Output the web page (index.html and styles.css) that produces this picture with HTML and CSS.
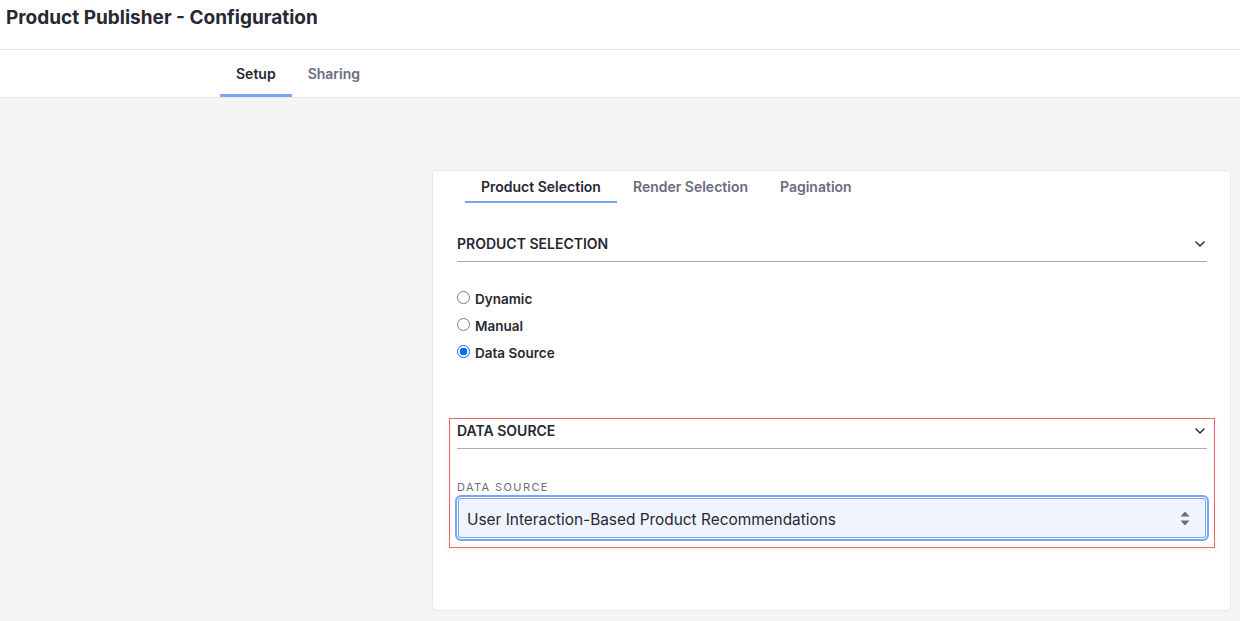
FILE: index.html
```html
<!DOCTYPE html>
<html lang="en">
<head>
<meta charset="utf-8">
<title>Product Publisher - Configuration</title>
<link rel="stylesheet" href="styles.css">
</head>
<body>
<header class="page-header">
  <h1 class="page-title">Product Publisher - Configuration</h1>
</header>
<nav class="top-tabs">
  <a class="top-tab active">Setup</a>
  <a class="top-tab">Sharing</a>
</nav>
<main class="main">
  <section class="card">
    <nav class="card-tabs">
      <a class="card-tab active">Product Selection</a>
      <a class="card-tab">Render Selection</a>
      <a class="card-tab">Pagination</a>
    </nav>
    <div class="card-body">
      <div class="panel-head">
        <span>PRODUCT SELECTION</span>
        <svg class="chevron" width="10" height="6" viewBox="0 0 10 6"><path d="M1 1l4 4 4-4" fill="none" stroke="#272833" stroke-width="1.5" stroke-linecap="round" stroke-linejoin="round"/></svg>
      </div>
      <div class="radios">
        <label class="radio"><span class="radio-dot"></span>Dynamic</label>
        <label class="radio"><span class="radio-dot"></span>Manual</label>
        <label class="radio"><span class="radio-dot checked"></span>Data Source</label>
      </div>
      <div class="highlight">
        <div class="panel-head">
          <span>DATA SOURCE</span>
          <svg class="chevron" width="10" height="6" viewBox="0 0 10 6"><path d="M1 1l4 4 4-4" fill="none" stroke="#272833" stroke-width="1.5" stroke-linecap="round" stroke-linejoin="round"/></svg>
        </div>
        <div class="field-label">DATA SOURCE</div>
        <div class="select">
          <span>User Interaction-Based Product Recommendations</span>
          <svg class="select-arrows" width="10" height="15" viewBox="0 0 10 15"><path d="M5 0.5L9.5 5.5H0.5Z" fill="#6b6c7e"/><path d="M5 14.5L0.5 9.5H9.5Z" fill="#6b6c7e"/></svg>
        </div>
      </div>
    </div>
  </section>
</main>
</body>
</html>
```
FILE: styles.css
```css
* { box-sizing: border-box; }
html, body { margin: 0; padding: 0; }
body {
  background: #f5f5f5;
  font-family: Inter, "Noto Sans", "Liberation Sans", sans-serif;
  color: #272833;
  height: 621px;
  overflow: hidden;
}
.page-header {
  background: #fff;
  height: 50px;
  border-bottom: 1px solid #e7e7ed;
  padding: 6px 0 0 6px;
}
.page-title {
  margin: 0;
  font-size: 19px;
  line-height: 24px;
  font-weight: 700;
  color: #272833;
}
.top-tabs {
  background: #fff;
  height: 48px;
  border-bottom: 1px solid #e7e7ed;
  display: flex;
  padding-left: 220px;
}
.top-tab {
  padding: 0 16px;
  height: 47px;
  line-height: 48px;
  font-size: 14px;
  font-weight: 600;
  color: #6b6c7e;
  border-bottom: 3px solid transparent;
}
.top-tab.active {
  color: #272833;
  border-bottom-color: #7aa5f7;
}
.main {
  padding: 72px 9px 10px 432px;
}
.card {
  background: #fff;
  border: 1px solid #e7e7ed;
  border-radius: 4px;
  height: 441px;
}
.card-tabs {
  display: flex;
  padding-left: 32px;
}
.card-tab {
  padding: 0 16px;
  height: 32px;
  line-height: 31px;
  font-size: 14px;
  font-weight: 600;
  color: #6b6c7e;
  border-bottom: 2px solid transparent;
}
.card-tab.active {
  color: #272833;
  border-bottom-color: #7aa5f7;
}
.card-body {
  padding: 0 23px 0 24px;
}
.panel-head {
  display: flex;
  align-items: center;
  justify-content: space-between;
  font-size: 14px;
  font-weight: 600;
  line-height: 20px;
  padding-bottom: 7px;
  border-bottom: 1px solid #a7a9bc;
  margin-top: 31px;
}
.chevron { margin-right: 2px; }
.radios {
  margin-top: 23px;
  display: flex;
  flex-direction: column;
}
.radio {
  display: flex;
  align-items: center;
  height: 27px;
  font-size: 13.5px;
  font-weight: 600;
}
.radio-dot {
  width: 13px;
  height: 13px;
  border-radius: 50%;
  border: 1px solid #7d7d7d;
  background: #fff;
  margin-right: 5px;
  margin-top: -2px;
}
.radio-dot.checked {
  border: 1.5px solid #0b6bff;
  background: radial-gradient(circle, #0b6bff 0 3.6px, #fff 4.1px);
}
.highlight {
  margin: 52px -8px 0 -8px;
  border: 1px solid #f0656d;
  padding: 0 7px 6px 7px;
  box-shadow: 0 2px 6px rgba(0, 0, 0, 0.06);
}
.highlight .panel-head { margin-top: 2px; }
.field-label {
  margin-top: 30px;
  font-size: 11px;
  line-height: 16px;
  letter-spacing: 1.4px;
  color: #6b6c7e;
}
.select {
  margin: 0 -2px;
  height: 46px;
  border: 2px solid #7aa5f7;
  border-radius: 6px;
  box-shadow: inset 0 0 0 1px #fff, inset 0 0 0 2px #7aa5f7;
  background: #f0f4ff;
  display: flex;
  align-items: center;
  justify-content: space-between;
  padding: 3px 17px 0 10px;
  font-size: 15.4px;
}
.select-arrows { margin-top: -3px; }
```
